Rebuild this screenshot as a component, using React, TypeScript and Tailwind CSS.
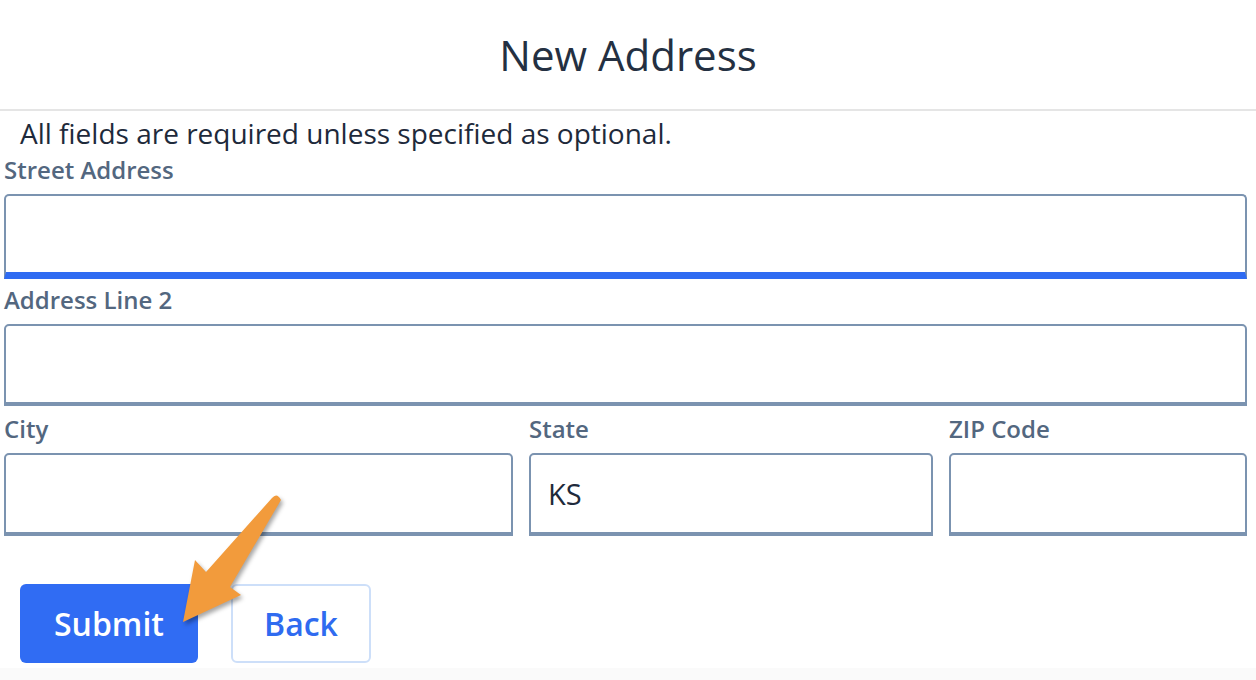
import React from 'react';

const font = { fontFamily: '"Open Sans", "Noto Sans", sans-serif' };

const Field = ({ label, className, inputClass, value }: { label: string; className?: string; inputClass?: string; value?: string }) => (
    <div className={className}>
        <label className="block text-[24px] leading-[30px] font-semibold text-[#53677f]">{label}</label>
        <input
            readOnly
            value={value ?? ''}
            className={`mt-[9px] block w-full bg-white border-2 border-[#7b93b0] rounded-t-[5px] px-[17px] text-[29px] text-[#1e2a3b] outline-none ${inputClass ?? ''}`}
        />
    </div>
);

// Flèche orange qui pointe sur le bouton Submit
const Arrow = () => (
    <svg
        className="absolute left-[160px] top-[490px] pointer-events-none"
        width="140"
        height="150"
        viewBox="0 0 140 150"
        style={{ filter: 'drop-shadow(2px 3px 2px rgba(0,0,0,0.35))' }}
    >
        <path d="M112 8 Q117 2 121 10 L70 97 L81 105 L23 132 L35 70 L46 82 Z" fill="#f29b3c" />
    </svg>
);

export default function App() {
    return (
        <div className="relative w-[1256px] h-[680px] bg-white overflow-hidden" style={font}>
            <header className="h-[111px] border-b-2 border-[#e5e5e5] flex items-center justify-center">
                <h1 className="text-[42px] text-[#243042]">New Address</h1>
            </header>
            <div className="pl-1 pr-[9px]">
                <p className="pl-4 text-[28px] leading-[44px] text-[#1e2a3b]">All fields are required unless specified as optional.</p>
                <Field label="Street Address" inputClass="h-[85px] border-b-[7px] border-b-[#2f6bf2]" />
                <Field label="Address Line 2" className="mt-[6px]" inputClass="h-[82px] border-b-4" />
                <div className="mt-[8px] grid grid-cols-[509px_404px_1fr] gap-4">
                    <Field label="City" inputClass="h-[83px] border-b-4" />
                    <Field label="State" value="KS" inputClass="h-[83px] border-b-4" />
                    <Field label="ZIP Code" inputClass="h-[83px] border-b-4" />
                </div>
                <div className="mt-[48px] pl-4 flex gap-[33px]">
                    <button className="w-[178px] h-[79px] rounded-[6px] bg-[#306cf3] text-white text-[32px] font-semibold">Submit</button>
                    <button className="w-[140px] h-[79px] rounded-[6px] bg-white border-2 border-[#cddff9] text-[#2f6bf0] text-[32px] font-semibold">Back</button>
                </div>
            </div>
            <div className="absolute left-0 right-0 bottom-0 h-[12px] bg-[#fafafa]" />
            <Arrow />
        </div>
    );
}
